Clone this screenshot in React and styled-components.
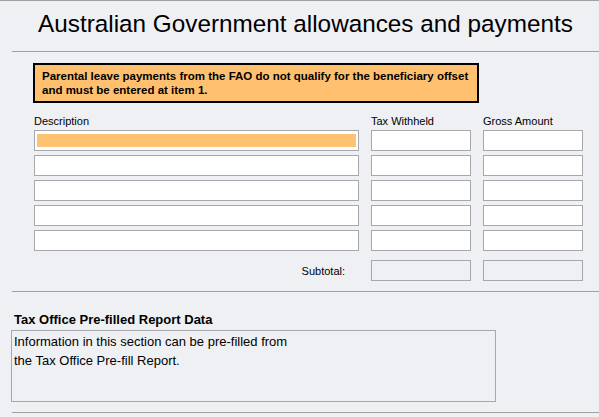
import React from "react";
import styled, { createGlobalStyle } from "styled-components";

const GlobalStyle = createGlobalStyle`
  html, body {
    margin: 0;
    padding: 0;
    background: #eff0f4;
  }
  body {
    font-family: "Liberation Sans", Arial, sans-serif;
    color: #000;
  }
`;

const Page = styled.div`
  width: 599px;
  height: 417px;
  box-sizing: border-box;
  border-top: 1px solid #a0a0a0;
  background: #eff0f4;
  overflow: hidden;
`;

const Section = styled.section`
  margin-left: 12px;
  border-bottom: 1px solid #a0a0a0;
`;

const Title = styled.h1`
  margin: 0;
  height: 50px;
  padding-top: 9px;
  box-sizing: border-box;
  font-size: 24.3px;
  font-weight: normal;
  text-align: center;
  line-height: 28px;
`;

const Body = styled.div`
  padding: 11px 0 10px 21px;
`;

const Notice = styled.div`
  width: 446px;
  box-sizing: border-box;
  border: 2px solid #000;
  background: #ffc070;
  padding: 4px 7px;
  font-size: 11.5px;
  font-weight: bold;
  line-height: 14px;
`;

const Grid = styled.div`
  display: grid;
  grid-template-columns: 325px 100px 100px;
  column-gap: 12px;
  row-gap: 4px;
  margin-top: 13px;
  margin-left: 1px;
`;

const Label = styled.div`
  font-size: 11px;
  line-height: 10px;
`;

const Field = styled.div`
  height: 21px;
  box-sizing: border-box;
  border: 1px solid #a8a8ac;
  background: ${({ $muted }) => ($muted ? "#eff0f4" : "#fff")};
  padding: 3px 2px;
`;

const Focus = styled.div`
  height: 100%;
  background: #ffc273;
`;

const SubtotalLabel = styled.div`
  font-size: 11px;
  text-align: right;
  padding-right: 14px;
  align-self: center;
`;

const SubtotalRow = styled.div`
  display: contents;
  & > * {
    margin-top: 5px;
  }
`;

const PrefillTitle = styled.h2`
  margin: 20px 0 2px 14px;
  font-size: 13px;
  font-weight: bold;
  line-height: 16px;
`;

const PrefillBox = styled.div`
  margin-left: 11px;
  width: 485px;
  height: 72px;
  box-sizing: border-box;
  border: 1px solid #a8a8ac;
  padding: 1px 2px;
  font-size: 13px;
  line-height: 19px;
`;

const Footer = styled.div`
  margin-left: 12px;
  margin-top: 10px;
  border-top: 1px solid #a0a0a0;
`;

const rows = [0, 1, 2, 3, 4];

export default function App() {
  return (
    <>
      <GlobalStyle />
      <Page>
        <Section>
          <Title>Australian Government allowances and payments</Title>
        </Section>
        <Section>
          <Body>
            <Notice>
              Parental leave payments from the FAO do not qualify for the beneficiary offset
              <br />
              and must be entered at item 1.
            </Notice>
            <Grid>
              <Label>Description</Label>
              <Label>Tax Withheld</Label>
              <Label>Gross Amount</Label>
              {rows.map((r) => (
                <React.Fragment key={r}>
                  <Field>{r === 0 && <Focus />}</Field>
                  <Field />
                  <Field />
                </React.Fragment>
              ))}
              <SubtotalRow>
                <SubtotalLabel>Subtotal:</SubtotalLabel>
                <Field $muted />
                <Field $muted />
              </SubtotalRow>
            </Grid>
          </Body>
        </Section>
        <PrefillTitle>Tax Office Pre-filled Report Data</PrefillTitle>
        <PrefillBox>
          Information in this section can be pre-filled from
          <br />
          the Tax Office Pre-fill Report.
        </PrefillBox>
        <Footer />
      </Page>
    </>
  );
}
